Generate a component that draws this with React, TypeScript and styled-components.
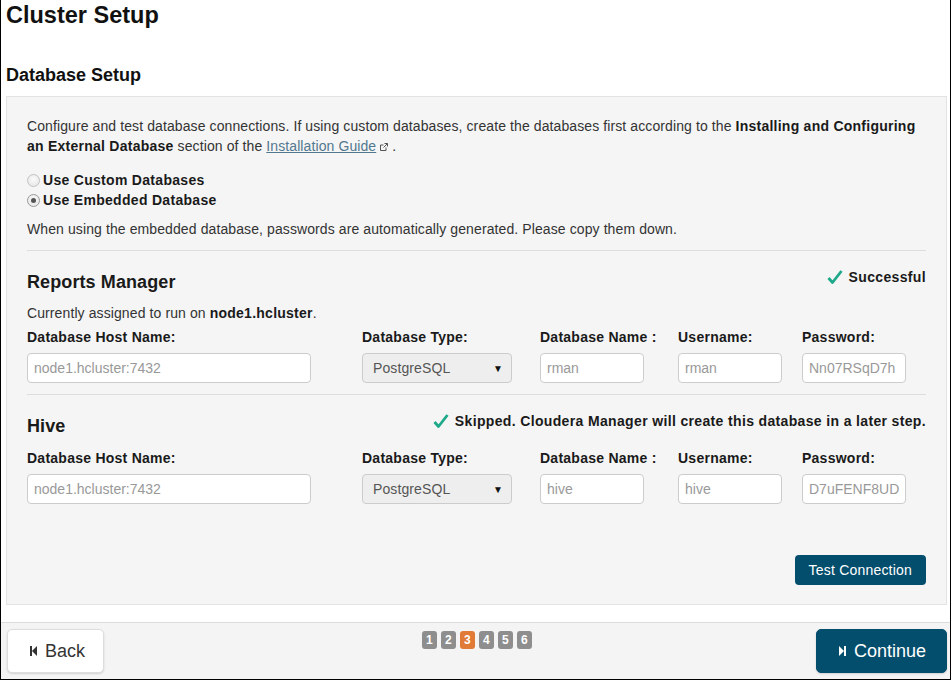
import React from "react";
import styled, { createGlobalStyle } from "styled-components";

const GlobalStyle = createGlobalStyle`
  html, body {
    margin: 0;
    padding: 0;
    background: #ffffff;
  }
  body {
    font-family: "Liberation Sans", Arial, sans-serif;
    font-size: 14px;
    letter-spacing: 0.1px;
    color: #333333;
  }
  * {
    box-sizing: border-box;
  }
`;

const Page = styled.div`
  width: 951px;
  height: 680px;
  border: 1px solid #000000;
  border-top: none;
  display: flex;
  flex-direction: column;
`;

const Main = styled.div`
  flex: 1;
  padding: 0 3px 0 5px;
`;

const Title = styled.h1`
  margin: 2px 0 0 0;
  font-size: 23.5px;
  line-height: 26px;
  font-weight: bold;
  letter-spacing: 0;
  color: #111111;
`;

const Subtitle = styled.h2`
  margin: 37px 0 0 0;
  font-size: 18px;
  line-height: 20px;
  font-weight: bold;
  letter-spacing: 0;
  color: #111111;
`;

const Panel = styled.div`
  margin-top: 11px;
  background: #f5f5f5;
  border: 1px solid #e3e3e3;
  padding: 19px 20px 19px;
`;

const Text = styled.p<{ $top?: number }>`
  margin: ${(p) => p.$top ?? 0}px 0 0;
  line-height: 20px;
  color: #333333;

  b {
    color: #1a1a1a;
    letter-spacing: 0.25px;
  }
`;

const Link = styled.a`
  color: #52788f;
  text-decoration: underline;
  cursor: pointer;
`;

const ExtIcon = styled.svg`
  margin-left: 4px;
  vertical-align: 0px;
`;

const RadioGroup = styled.div`
  margin-top: 14px;
  display: flex;
  flex-direction: column;
`;

const RadioRow = styled.label`
  display: flex;
  align-items: center;
  gap: 3px;
  height: 20px;
  font-weight: bold;
  letter-spacing: 0.3px;
  color: #1a1a1a;
`;

const RadioDot = styled.span<{ $checked?: boolean }>`
  width: 13px;
  height: 13px;
  border-radius: 50%;
  border: 1px solid ${(p) => (p.$checked ? "#9a9a9a" : "#c2c2c2")};
  background: radial-gradient(circle at 50% 40%, #fafafa, #e4e4e4);
  display: flex;
  align-items: center;
  justify-content: center;

  &::after {
    content: "";
    width: 5px;
    height: 5px;
    border-radius: 50%;
    background: ${(p) => (p.$checked ? "#555555" : "transparent")};
  }
`;

const Divider = styled.div<{ $top: number }>`
  margin-top: ${(p) => p.$top}px;
  height: 1px;
  background: #dddddd;
`;

const SectionHeader = styled.div`
  margin-top: 16px;
  display: flex;
  justify-content: space-between;
  align-items: flex-start;
`;

const SectionTitle = styled.h3`
  margin: 4px 0 0;
  font-size: 18px;
  line-height: 22px;
  font-weight: bold;
  letter-spacing: 0.1px;
  color: #1a1a1a;
`;

const Status = styled.div`
  display: flex;
  align-items: center;
  gap: 6px;
  line-height: 20px;
  font-weight: bold;
  letter-spacing: 0.35px;
  color: #1a1a1a;
`;

const FieldGrid = styled.div<{ $top: number }>`
  margin-top: ${(p) => p.$top}px;
  display: grid;
  grid-template-columns: 335px 178px 138px 124px 1fr;
`;

const Field = styled.div`
  display: flex;
  flex-direction: column;
  gap: 6px;
`;

const FieldLabel = styled.label`
  line-height: 20px;
  font-weight: bold;
  letter-spacing: 0.25px;
  color: #1a1a1a;
`;

const TextInput = styled.input<{ $width: number }>`
  width: ${(p) => p.$width}px;
  height: 30px;
  padding: 0 6px;
  border: 1px solid #cccccc;
  border-radius: 4px;
  background: #ffffff;
  font-family: "Liberation Sans", Arial, sans-serif;
  font-size: 14px;
  color: #555555;

  &::placeholder {
    color: #999999;
  }
`;

const Select = styled.div`
  width: 150px;
  height: 30px;
  padding: 0 8px 0 10px;
  border: 1px solid #cccccc;
  border-radius: 4px;
  background: #eeeeee;
  display: flex;
  align-items: center;
  justify-content: space-between;
  color: #555555;
`;

const Caret = styled.span`
  font-size: 10px;
  color: #111111;
`;

const Actions = styled.div`
  margin-top: 51px;
  display: flex;
  justify-content: flex-end;
`;

const PrimaryButton = styled.button`
  height: 30px;
  padding: 0 14px;
  border: none;
  border-radius: 4px;
  background: #034e6c;
  color: #ffffff;
  font-family: "Liberation Sans", Arial, sans-serif;
  font-size: 14px;
  letter-spacing: 0.2px;
  cursor: pointer;
`;

const Footer = styled.div`
  height: 57px;
  border-top: 1px solid #dcdcdc;
  background: #f4f4f4;
  padding: 6px 3px 0 6px;
  display: grid;
  grid-template-columns: 1fr auto 1fr;
  align-items: start;
`;

const NavButton = styled.button<{ $primary?: boolean }>`
  justify-self: ${(p) => (p.$primary ? "end" : "start")};
  width: ${(p) => (p.$primary ? 131 : 97)}px;
  height: 44px;
  padding: 0 0 0 22px;
  display: flex;
  align-items: center;
  gap: 8px;
  border: 1px solid ${(p) => (p.$primary ? "#034e6c" : "#dddddd")};
  border-radius: 5px;
  background: ${(p) => (p.$primary ? "#034e6c" : "#ffffff")};
  color: ${(p) => (p.$primary ? "#ffffff" : "#333333")};
  box-shadow: 0 1px 2px rgba(0, 0, 0, 0.15);
  font-family: "Liberation Sans", Arial, sans-serif;
  font-size: 18px;
  cursor: pointer;
`;

const Steps = styled.div`
  margin-top: 2px;
  display: flex;
  gap: 4px;
`;

const Step = styled.span<{ $active?: boolean }>`
  width: 15px;
  height: 18px;
  border-radius: 3px;
  background: ${(p) => (p.$active ? "#e07a36" : "#8e8e8e")};
  color: #ffffff;
  font-size: 12px;
  font-weight: bold;
  display: flex;
  align-items: center;
  justify-content: center;
`;

const Check = () => (
  <svg width="16" height="16" viewBox="0 0 16 16">
    <path d="M1.5 9 L5.5 13.5 L14.5 2" fill="none" stroke="#1ea98a" strokeWidth="2.8" strokeLinejoin="round" />
  </svg>
);

const SkipBackIcon = () => (
  <svg width="7" height="10" viewBox="0 0 7 10">
    <rect x="0" y="0" width="2" height="10" fill="currentColor" />
    <path d="M7 0 L2 5 L7 10 Z" fill="currentColor" />
  </svg>
);

const SkipForwardIcon = () => (
  <svg width="7" height="10" viewBox="0 0 7 10">
    <path d="M0 0 L5 5 L0 10 Z" fill="currentColor" />
    <rect x="5" y="0" width="2" height="10" fill="currentColor" />
  </svg>
);

type Db = {
  name: string;
  user: string;
  password: string;
};

const DbFields = ({ db, top }: { db: Db; top: number }) => (
  <FieldGrid $top={top}>
    <Field>
      <FieldLabel>Database Host Name:</FieldLabel>
      <TextInput $width={284} placeholder="node1.hcluster:7432" readOnly />
    </Field>
    <Field>
      <FieldLabel>Database Type:</FieldLabel>
      <Select>
        PostgreSQL <Caret>▼</Caret>
      </Select>
    </Field>
    <Field>
      <FieldLabel>Database Name :</FieldLabel>
      <TextInput $width={104} placeholder={db.name} readOnly />
    </Field>
    <Field>
      <FieldLabel>Username:</FieldLabel>
      <TextInput $width={104} placeholder={db.user} readOnly />
    </Field>
    <Field>
      <FieldLabel>Password:</FieldLabel>
      <TextInput $width={104} placeholder={db.password} readOnly />
    </Field>
  </FieldGrid>
);

const App = () => {
  return (
    <>
      <GlobalStyle />
      <Page>
        <Main>
          <Title>Cluster Setup</Title>
          <Subtitle>Database Setup</Subtitle>
          <Panel>
            <Text>
              Configure and test database connections. If using custom databases, create the databases first
              according to the <b>Installing and Configuring</b>
              <br />
              <b>an External Database</b> section of the <Link>Installation Guide</Link>
              <ExtIcon width="8" height="8" viewBox="0 0 8 8">
                <path d="M6 4.5 V7.5 H0.5 V2 H3.5" fill="none" stroke="#555" strokeWidth="1" />
                <path d="M4.5 0.5 H7.5 V3.5 M7.5 0.5 L3.5 4.5" fill="none" stroke="#555" strokeWidth="1" />
              </ExtIcon>{" "}
              .
            </Text>
            <RadioGroup>
              <RadioRow>
                <RadioDot />
                Use Custom Databases
              </RadioRow>
              <RadioRow>
                <RadioDot $checked />
                Use Embedded Database
              </RadioRow>
            </RadioGroup>
            <Text $top={9}>
              When using the embedded database, passwords are automatically generated. Please copy them down.
            </Text>
            <Divider $top={11} />

            <SectionHeader>
              <SectionTitle>Reports Manager</SectionTitle>
              <Status>
                <Check />
                Successful
              </Status>
            </SectionHeader>
            <Text $top={10}>
              Currently assigned to run on <b>node1.hcluster</b>.
            </Text>
            <DbFields db={{ name: "rman", user: "rman", password: "Nn07RSqD7h" }} top={4} />
            <Divider $top={11} />

            <SectionHeader>
              <SectionTitle>Hive</SectionTitle>
              <Status>
                <Check />
                Skipped. Cloudera Manager will create this database in a later step.
              </Status>
            </SectionHeader>
            <DbFields db={{ name: "hive", user: "hive", password: "D7uFENF8UD" }} top={11} />

            <Actions>
              <PrimaryButton>Test Connection</PrimaryButton>
            </Actions>
          </Panel>
        </Main>
        <Footer>
          <NavButton>
            <SkipBackIcon />
            Back
          </NavButton>
          <Steps>
            {[1, 2, 3, 4, 5, 6].map((n) => (
              <Step key={n} $active={n === 3}>
                {n}
              </Step>
            ))}
          </Steps>
          <NavButton $primary>
            <SkipForwardIcon />
            Continue
          </NavButton>
        </Footer>
      </Page>
    </>
  );
};

export default App;
